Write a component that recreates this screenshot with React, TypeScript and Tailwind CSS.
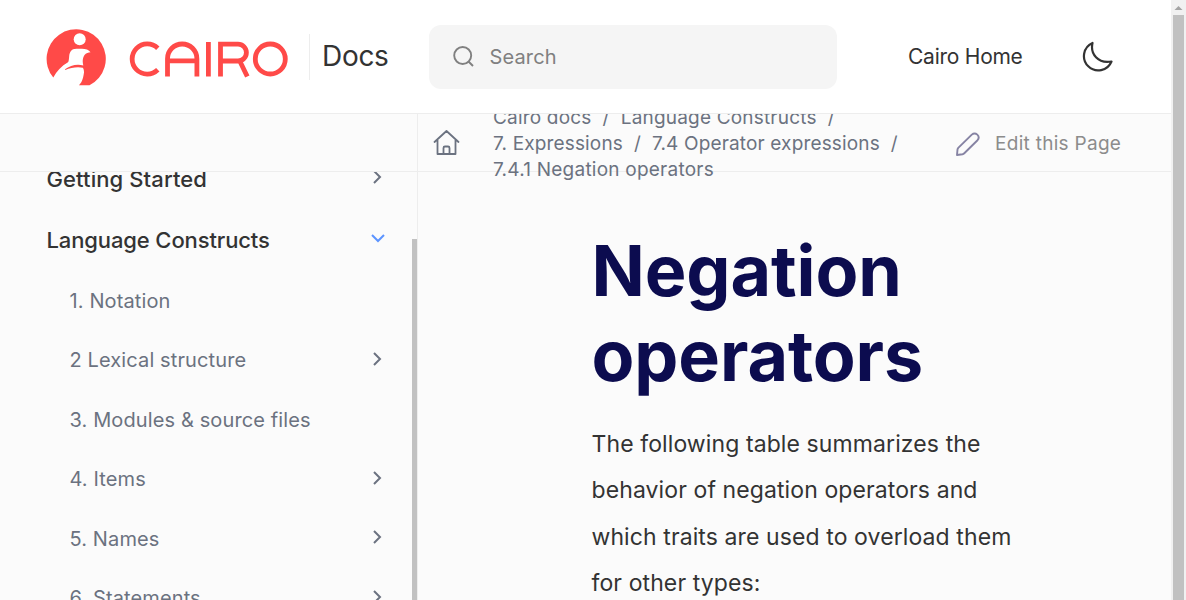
import React from "react";

const Chevron = ({ open = false }: { open?: boolean }) => (
  <svg width="14" height="14" viewBox="0 0 14 14" fill="none" className={open ? "text-[#5c94ff]" : "text-[#6b7280]"} stroke="currentColor" strokeWidth="2">
    {open ? <path d="M1 4l6 6 6-6" /> : <path d="M3 1l6 6-6 6" />}
  </svg>
);

const items = [
  { label: "1. Notation", more: false },
  { label: "2 Lexical structure", more: true },
  { label: "3. Modules & source files", more: false },
  { label: "4. Items", more: true },
  { label: "5. Names", more: true },
  { label: "6. Statements", more: true },
];

const Logo = () => (
  <svg width="242" height="58" viewBox="0 0 242 58" fill="none" role="img" aria-label="Cairo">
    <path d="M7.300 49.600A29.600 29.600 0 1 1 43.500 57.300H33C36.500 53.500 37.300 49.500 38 44.500C38 43 37.800 41 36.800 39.800C32 38.500 25 39.500 19.300 42L19 41.300C24 37.500 31 35.500 37.300 37.500C36.300 34 36.500 30 38.500 27C40 25 42.500 24.400 44.500 24.300C43 21.800 39.500 20.700 36 20.700H30.500C25 20.700 23.800 24 23.200 28C22.900 31 22.800 33.500 22 34.300C15.500 38 10.500 43.500 7.300 49.600Z" fill="#ff4a48" />
    <circle cx="33.700" cy="11.200" r="6" fill="#fff" />
    <g stroke="#ff4a48" strokeWidth="4.800">
      <path d="M111.800 20.200A15.100 15.100 0 1 0 111.800 41.800" />
      <path d="M121.500 48.500V30.700A14.700 14.700 0 0 1 150.900 30.700V48.500M121.500 32.800H150.900" />
      <path d="M162.400 14V48.500" />
      <path d="M174.500 48.500V16.200H192A8.400 8.400 0 0 1 192 33H174.500M194 33.500L201.300 48.500" />
      <circle cx="224.300" cy="31" r="15" />
    </g>
  </svg>
);

export default function App() {
  return (
    <div className="flex h-[600px] w-[1186px] overflow-hidden bg-[#fbfbfb] font-['Inter',sans-serif]">
      <div className="flex w-[1171px] flex-col">
        <header className="relative z-10 flex h-[114px] shrink-0 items-center border-b border-[#ededed] bg-white">
          <div className="ml-[46px] w-[263px] pt-px"><Logo /></div>
          <div className="flex h-[46px] w-[120px] items-center border-l border-[#ededed] pb-0.5 pl-3 text-[28px] tracking-[-0.3px] text-[#333]">Docs</div>
          <div className="flex h-16 w-[408px] items-center rounded-xl bg-[#f5f5f5] pl-6 text-[#808080]">
            <svg width="21" height="21" viewBox="0 0 21 21" fill="none" stroke="currentColor" strokeWidth="1.900"><circle cx="9.700" cy="9.500" r="8.500" /><path d="M15.500 15.500L20 20" /></svg>
            <span className="ml-[15.5px] text-[20px] tracking-[0.15px]">Search</span>
          </div>
          <a className="ml-[71px] w-[174px] text-[21px] tracking-[-0.25px] text-[#333]">Cairo Home</a>
          <svg width="32" height="32" viewBox="0 0 32 32" fill="none" stroke="#333" strokeWidth="2.200" strokeLinejoin="round"><path d="M10.500 2C8 13 16 23 29.500 20.500A14.300 14.300 0 1 1 10.500 2Z" /></svg>
        </header>
        <div className="flex h-[58px] shrink-0 items-center border-b border-[#ededed]">
          <div className="h-[58px] w-[418px] border-r border-[#ededed]" />
          <svg className="ml-[15px]" width="27" height="27" viewBox="0 0 27 27" fill="none" stroke="#6b7280" strokeWidth="1.800" strokeLinecap="round" strokeLinejoin="round"><path d="M1.500 13L13.500 2L25.500 13M4.500 11V25H22.500V11M10.500 25V19Q10.500 17.500 12 17.500H15Q16.500 17.500 16.500 19V25" /></svg>
          <div className="ml-[33px] w-[463px] pt-0.5 text-[19px] leading-[26px] tracking-[0.17px] whitespace-pre text-[#6b7280]">
            <div className="tracking-[0.19px]">Cairo docs  /  Language Constructs  /</div>
            <div className="tracking-[0.15px]">7. Expressions  /  7.4 Operator expressions  /</div>
            <div className="tracking-[0.23px]">7.4.1 Negation operators</div>
          </div>
          <svg className="mt-[3px]" width="24" height="24" viewBox="0 0 24 24" fill="none" stroke="#8683a3" strokeWidth="1.900" strokeLinejoin="round"><path d="M1 23L1.500 17.500Q1.700 16.500 2.500 15.700L15.800 2.600Q18.600 .200 21.300 2.600Q24 5.200 21.500 8.200L8.300 21.200Q7.500 22 6.500 22.200Z" /></svg>
          <span className="ml-[15px] pt-[3px] text-[19px] tracking-[0.29px] whitespace-nowrap text-[#8c8c8c]">Edit this Page</span>
        </div>
        <div className="flex min-h-0 flex-1">
          <nav className="flex w-[418px] shrink-0 overflow-hidden border-r border-[#ededed]">
            <div className="w-[412px] pr-[27px] pl-[46.5px]">
              <div className="-mt-[23px] flex h-[61px] items-center justify-between text-[22px] font-medium text-[#333]"><span className="tracking-[0.1px]">Getting Started</span><div className="pb-1.5"><Chevron /></div></div>
              <div className="flex h-[61px] items-center justify-between text-[22px] font-medium text-[#333]"><span className="tracking-[-0.12px]">Language Constructs</span><div className="pb-1.5"><Chevron open /></div></div>
              {items.map((item) => (
                <div key={item.label} className="flex h-[59.5px] items-center justify-between pl-[23px] text-[20px] tracking-[0.12px] text-[#6b7280]">
                  <span>{item.label}</span>{item.more && <div className="pb-[3px]"><Chevron /></div>}
                </div>
              ))}
            </div>
            <div className="mt-[67px] h-[361px] w-[5px] bg-[#c1c1c1]" />
          </nav>
          <main className="pt-[56px] pl-[173.500px]">
            <h1 className="w-[440px] text-[70px] leading-[85px] font-bold tracking-[-0.1px] text-[#0c0c4f]">Negation operators</h1>
            <p className="mt-[23px] w-[440px] text-[23px] leading-[46.400px] tracking-[0.1px] text-[#333]">The following table summarizes the<br />behavior of negation operators and<br />which traits are used to overload them<br />for other types:</p>
          </main>
        </div>
      </div>
      <div className="flex w-[15px] flex-col items-center bg-[#f1f1f1]">
        <svg width="15" height="15" viewBox="0 0 15 15"><path d="M3.500 10L7.500 6L11.500 10Z" fill="#a3a3a3" /></svg>
        <div className="w-[11px] flex-1 bg-[#c1c1c1]" />
      </div>
    </div>
  );
}
